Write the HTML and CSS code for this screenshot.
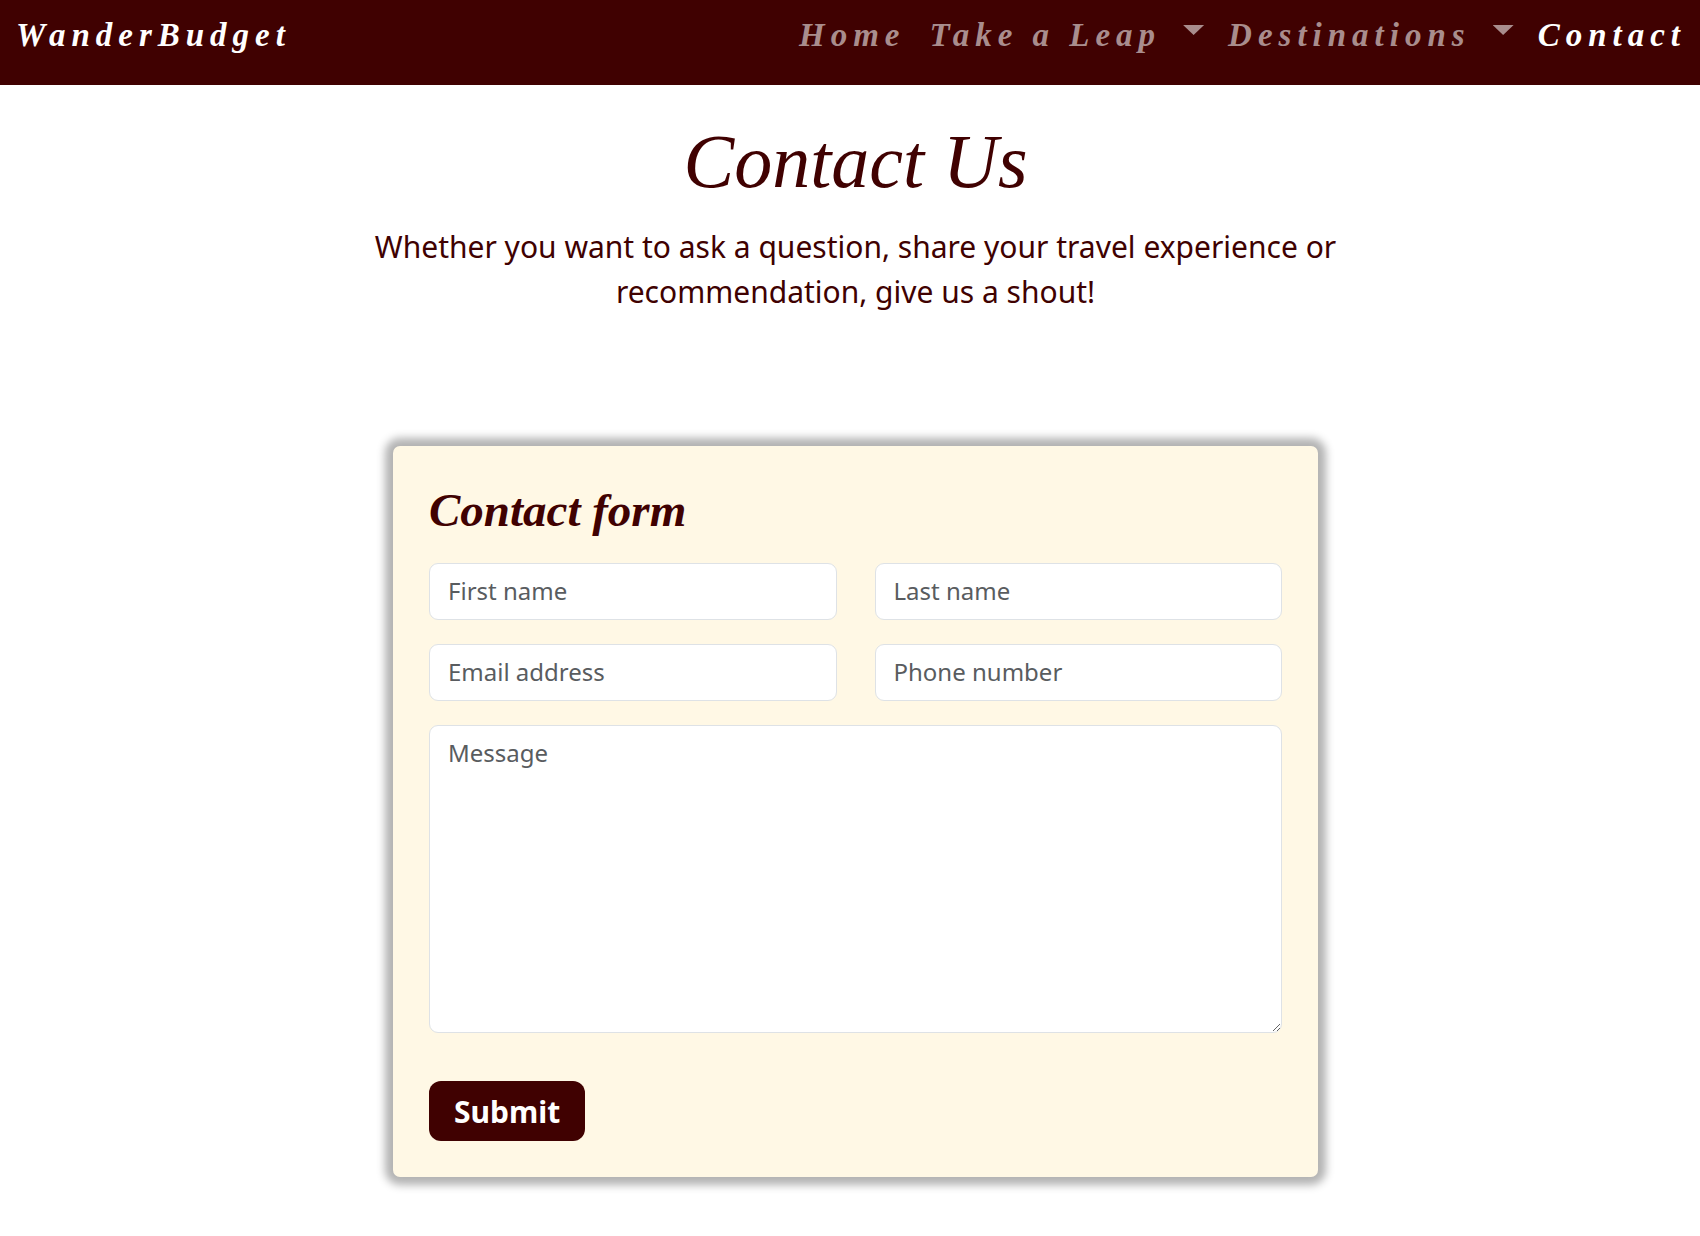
FILE: index.html
```html
<!DOCTYPE html>
<html lang="en">
<head>
<meta charset="utf-8">
<meta name="viewport" content="width=device-width, initial-scale=1">
<title>WanderBudget - Contact</title>
<link rel="stylesheet" href="styles.css">
</head>
<body>
<header class="navbar">
  <a class="brand" href="#">WanderBudget</a>
  <nav class="links">
    <a href="#">Home</a>
    <a class="dropdown" href="#">Take a Leap<span class="caret"></span></a>
    <a class="dropdown" href="#">Destinations<span class="caret"></span></a>
    <a class="active" href="#" aria-current="page">Contact</a>
  </nav>
</header>
<main class="page">
  <section class="intro">
    <h1>Contact Us</h1>
    <p>Whether you want to ask a question, share your travel experience or recommendation, give us a shout!</p>
  </section>
  <form class="card">
    <h2>Contact form</h2>
    <div class="fields">
      <input class="field" type="text" placeholder="First name" aria-label="First name">
      <input class="field" type="text" placeholder="Last name" aria-label="Last name">
      <input class="field" type="email" placeholder="Email address" aria-label="Email address">
      <input class="field" type="tel" placeholder="Phone number" aria-label="Phone number">
      <textarea class="field message" placeholder="Message" aria-label="Message"></textarea>
    </div>
    <button class="submit" type="submit">Submit</button>
  </form>
</main>
</body>
</html>
```
FILE: styles.css
```css
* { box-sizing: border-box; }

body {
  margin: 0;
  background: #fff;
  color: #400101;
  font-family: "Noto Sans", sans-serif;
}

h1, h2, p { margin: 0; }

.navbar {
  display: flex;
  justify-content: space-between;
  align-items: flex-start;
  padding: 15px 14px 30px 16px;
  background: #400101;
  font-family: "Liberation Serif", serif;
  font-size: 33px;
  font-style: italic;
  font-weight: 700;
  line-height: 40px;
  letter-spacing: 6px;
}

.navbar a {
  color: #a98d8d;
  text-decoration: none;
  white-space: nowrap;
}

.navbar .brand,
.navbar .active { color: #fff; }

.links {
  display: flex;
  gap: 24px;
}

.dropdown {
  display: flex;
  gap: 22px;
}

.caret {
  margin-top: 10px;
  width: 21px;
  height: 10px;
  background: currentColor;
  clip-path: polygon(0 0, 100% 0, 50% 100%);
}

.page {
  display: flex;
  flex-direction: column;
  align-items: center;
  padding: 32px 0 56px 11px;
}

.intro {
  max-width: 1000px;
  text-align: center;
}

.intro h1 {
  font-family: "Liberation Serif", serif;
  font-size: 76px;
  font-style: italic;
  font-weight: 400;
  line-height: 88px;
}

.intro p {
  margin-top: 19px;
  font-size: 30px;
  line-height: 45px;
}

.card {
  width: 100%;
  max-width: 925px;
  margin-top: 132px;
  padding: 36px;
  border-radius: 7px;
  background: #fff8e5;
  box-shadow: 0 0 8px 8px #b3b3b3;
}

.card h2 {
  font-family: "Liberation Serif", serif;
  font-size: 47px;
  font-style: italic;
  font-weight: 700;
  line-height: 56px;
}

.fields {
  display: grid;
  grid-template-columns: 1fr 1fr;
  gap: 24px 38px;
  margin-top: 25px;
}

.field {
  width: 100%;
  height: 57px;
  padding: 8px 18px 10px;
  border: 1px solid #dee2e6;
  border-radius: 9px;
  background: #fff;
  color: #212529;
  font-family: inherit;
  font-size: 24px;
  line-height: 37px;
}

.field::placeholder {
  color: #595c5f;
  opacity: 1;
}

.message {
  display: block;
  grid-column: 1 / -1;
  height: 308px;
  resize: vertical;
}

.submit {
  display: block;
  height: 60px;
  margin-top: 48px;
  padding: 0 25px;
  border: 0;
  border-radius: 12px;
  background: #400101;
  color: #fff;
  font-family: inherit;
  font-size: 30px;
  font-weight: 700;
}
```
